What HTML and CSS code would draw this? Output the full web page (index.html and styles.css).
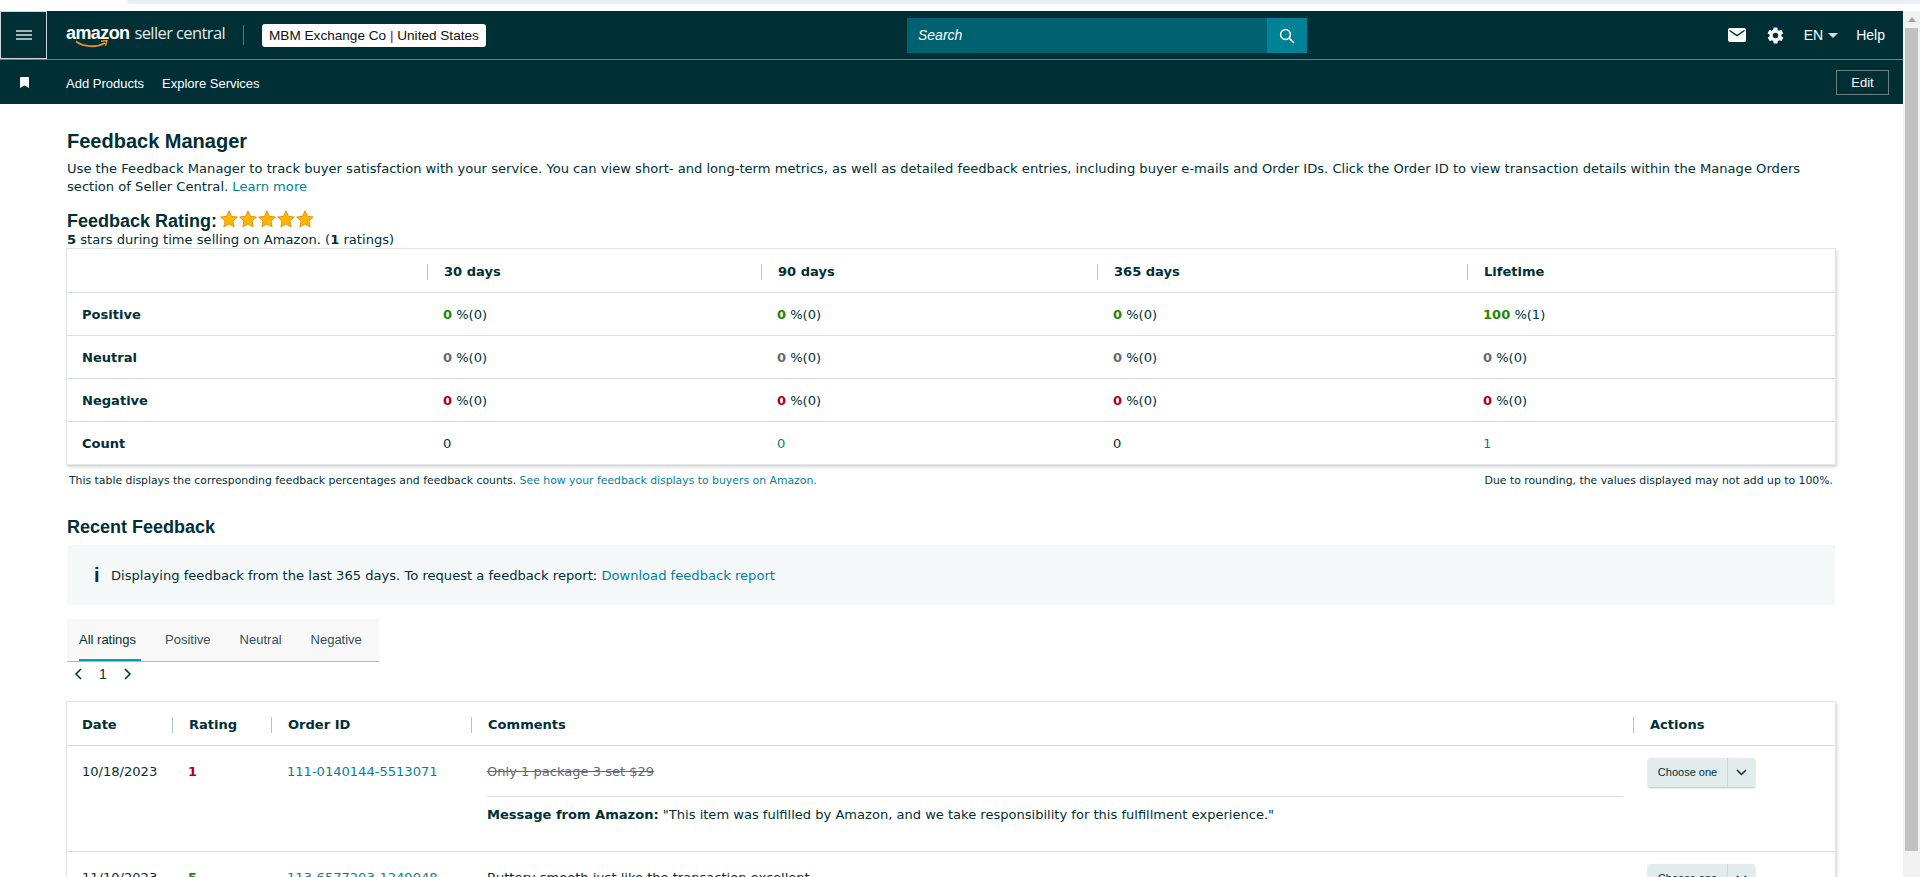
FILE: index.html
```html
<!DOCTYPE html>
<html>

<head>
    <meta charset='utf-8'>
    <title>Feedback Manager</title>
    <link rel="stylesheet" href="styles.css">
</head>

<body>
    <div class="browser-strip"><div class="browser-tab"></div></div>
    <div class="window">
        <div class="page">
            <header class="topbar">
                <div class="nav-main">
                    <div class="menu-button">
                        <svg width="16" height="10" viewBox="0 0 16 10"><path d="M0 1h16M0 5h16M0 9h16" stroke="#fff" stroke-width="1.600" opacity=".85"/></svg>
                    </div>
                    <div class="logo">
                        <span class="logo-amazon">amazon</span><span class="logo-seller">seller central</span>
                        <svg class="logo-smile" width="34" height="9" viewBox="0 0 34 9"><path d="M1 1.500C9 7 21 8 30 3" fill="none" stroke="#e8912d" stroke-width="1.800"/><path d="M26 1.200l6-.7-1.600 5.200" fill="none" stroke="#e8912d" stroke-width="1.500"/></svg>
                    </div>
                    <div class="logo-divider"></div>
                    <div class="account">MBM Exchange Co <span class="account-bar">|</span> United States</div>
                    <div class="search">
                        <div class="search-input">Search</div>
                        <div class="search-button">
                            <svg width="16" height="16" viewBox="0 0 16 16"><circle cx="6.500" cy="6.500" r="4.900" fill="none" stroke="#fff" stroke-width="1.500"/><path d="M10 10l5 5" stroke="#fff" stroke-width="1.700"/></svg>
                        </div>
                    </div>
                    <div class="nav-right">
                        <svg class="icon-mail" width="18" height="14" viewBox="0 0 18 14"><rect width="18" height="14" rx="2" fill="#fff"/><path d="M1.500 2.500L9 7.500l7.500-5" fill="none" stroke="#002f36" stroke-width="1.500"/></svg>
                        <svg class="icon-gear" width="19" height="19" viewBox="0 0 24 24"><path fill="#fff" d="M19.400 13a7.500 7.500 0 0 0 0-2l2.100-1.600a.5.5 0 0 0 .1-.7l-2-3.400a.5.5 0 0 0-.6-.2l-2.500 1a7.500 7.500 0 0 0-1.700-1l-.4-2.700a.5.5 0 0 0-.5-.4h-4a.5.5 0 0 0-.5.4l-.4 2.700a7.500 7.500 0 0 0-1.700 1l-2.500-1a.5.5 0 0 0-.6.2l-2 3.400a.5.5 0 0 0 .1.700L4.600 11a7.500 7.500 0 0 0 0 2l-2.100 1.600a.5.5 0 0 0-.1.700l2 3.400c.1.200.4.300.6.200l2.500-1c.5.400 1.100.700 1.700 1l.4 2.700c0 .2.200.4.500.4h4c.3 0 .5-.2.500-.4l.4-2.700c.6-.3 1.200-.6 1.700-1l2.500 1c.2.100.5 0 .6-.2l2-3.400a.5.5 0 0 0-.1-.7zM12 15.500a3.500 3.500 0 1 1 0-7 3.500 3.500 0 0 1 0 7z"/></svg>
                        <span class="lang">EN</span><span class="lang-caret"></span>
                        <span class="help">Help</span>
                    </div>
                </div>
                <div class="nav-sub">
                    <svg class="icon-bookmark" width="9" height="11" viewBox="0 0 9 11"><path d="M0 1a1 1 0 0 1 1-1h7a1 1 0 0 1 1 1v10L4.500 8.500 0 11z" fill="#fff"/></svg>
                    <a class="nav-link nav-link-first">Add Products</a>
                    <a class="nav-link">Explore Services</a>
                    <div class="edit-button">Edit</div>
                </div>
            </header>

            <main class="content">
                <h1 class="title">Feedback Manager</h1>
                <p class="intro">Use the Feedback Manager to track buyer satisfaction with your service. You can view short- and long-term metrics, as well as detailed feedback entries, including buyer e-mails and Order IDs. Click the Order ID to view transaction details within the Manage Orders section of Seller Central. <a class="link">Learn more</a></p>

                <div class="rating-head">
                    <h2 class="subtitle">Feedback Rating:</h2>
                    <div class="stars">
                        <svg width="95" height="18" viewBox="0 0 95 18">
                            <defs><path id="star" d="M9 .8l2.500 5.500 5.900.7-4.400 4 1.200 5.900L9 14l-5.200 2.900L5 11 .6 7l5.900-.7z" fill="#ffb400" stroke="#d98a00" stroke-width=".8"/></defs>
                            <use href="#star"/><use href="#star" x="19"/><use href="#star" x="38"/><use href="#star" x="57"/><use href="#star" x="76"/>
                        </svg>
                    </div>
                </div>
                <p class="rating-note"><b>5</b> stars during time selling on Amazon. (<b>1</b> ratings)</p>

                <table class="card-table summary">
                    <colgroup><col class="c-label"><col class="c-30"><col class="c-90"><col class="c-365"><col></colgroup>
                    <tr>
                        <th></th><th><span class="th-sep">30 days</span></th><th><span class="th-sep">90 days</span></th><th><span class="th-sep">365 days</span></th><th><span class="th-sep">Lifetime</span></th>
                    </tr>
                    <tr>
                        <td class="row-label">Positive</td>
                        <td><b class="good">0</b> %(0)</td><td><b class="good">0</b> %(0)</td><td><b class="good">0</b> %(0)</td><td><b class="good">100</b> %(1)</td>
                    </tr>
                    <tr>
                        <td class="row-label">Neutral</td>
                        <td><b class="neutral">0</b> %(0)</td><td><b class="neutral">0</b> %(0)</td><td><b class="neutral">0</b> %(0)</td><td><b class="neutral">0</b> %(0)</td>
                    </tr>
                    <tr>
                        <td class="row-label">Negative</td>
                        <td><b class="bad">0</b> %(0)</td><td><b class="bad">0</b> %(0)</td><td><b class="bad">0</b> %(0)</td><td><b class="bad">0</b> %(0)</td>
                    </tr>
                    <tr>
                        <td class="row-label">Count</td>
                        <td>0</td><td><a class="link">0</a></td><td>0</td><td><a class="link">1</a></td>
                    </tr>
                </table>
                <div class="table-note">
                    <span>This table displays the corresponding feedback percentages and feedback counts. <a class="link">See how your feedback displays to buyers on Amazon.</a></span>
                    <span>Due to rounding, the values displayed may not add up to 100%.</span>
                </div>

                <h2 class="subtitle recent">Recent Feedback</h2>
                <div class="notice">
                    <span class="notice-icon">i</span>
                    <span>Displaying feedback from the last 365 days. To request a feedback report: <a class="link">Download feedback report</a></span>
                </div>

                <div class="tabs">
                    <div class="tab tab-active">All ratings</div>
                    <div class="tab">Positive</div>
                    <div class="tab">Neutral</div>
                    <div class="tab">Negative</div>
                </div>
                <div class="pager">
                    <svg width="8" height="12" viewBox="0 0 8 12"><path d="M7 1L2 6l5 5" fill="none" stroke="#002f36" stroke-width="1.500"/></svg>
                    <span>1</span>
                    <svg width="8" height="12" viewBox="0 0 8 12"><path d="M1 1l5 5-5 5" fill="none" stroke="#002f36" stroke-width="1.500"/></svg>
                </div>

                <table class="card-table recent-table">
                    <colgroup><col class="c-date"><col class="c-rating"><col class="c-order"><col class="c-comments"><col></colgroup>
                    <tr>
                        <th class="th-first">Date</th><th><span class="th-sep">Rating</span></th><th><span class="th-sep">Order ID</span></th><th><span class="th-sep">Comments</span></th><th><span class="th-sep">Actions</span></th>
                    </tr>
                    <tr class="feedback-row">
                        <td>10/18/2023</td>
                        <td><b class="bad">1</b></td>
                        <td><a class="link">111-0140144-5513071</a></td>
                        <td>
                            <div class="struck">Only 1 package 3 set $29</div>
                            <div class="amazon-msg"><b>Message from Amazon:</b> "This item was fulfilled by Amazon, and we take responsibility for this fulfillment experience."</div>
                        </td>
                        <td class="action-cell">
                            <div class="split-button"><span class="split-label">Choose one</span><span class="split-arrow"><svg width="11" height="7" viewBox="0 0 11 7"><path d="M1 1l4.500 4.500L10 1" fill="none" stroke="#002f36" stroke-width="1.500"/></svg></span></div>
                        </td>
                    </tr>
                    <tr class="feedback-row">
                        <td>11/10/2023</td>
                        <td><b class="good">5</b></td>
                        <td><a class="link">113-6577203-1249048</a></td>
                        <td>Buttery smooth just like the transaction excellent</td>
                        <td class="action-cell">
                            <div class="split-button"><span class="split-label">Choose one</span><span class="split-arrow"><svg width="11" height="7" viewBox="0 0 11 7"><path d="M1 1l4.500 4.500L10 1" fill="none" stroke="#002f36" stroke-width="1.500"/></svg></span></div>
                        </td>
                    </tr>
                </table>
            </main>
        </div>

        <div class="scrollbar">
            <div class="scroll-up"></div>
            <div class="scroll-thumb"></div>
        </div>
    </div>
</body>

</html>
```

FILE: styles.css
```css
html, body {
    height: 100%;
    margin: 0;
    overflow: hidden;
    background: #fff;
}
body {
    font-family: "DejaVu Sans", sans-serif;
    font-size: 13.1px;
    color: #002f36;
    display: flex;
    flex-direction: column;
}
a {
    text-decoration: none;
}
.browser-strip {
    height: 11px;
    flex: none;
    background: #fff;
}
.browser-tab {
    height: 4px;
    margin-left: 127px;
    background: #eceef7;
    border-bottom-left-radius: 8px;
}
.window {
    flex: 1;
    display: flex;
    min-height: 0;
}
.page {
    flex: 1;
    min-width: 0;
    overflow: hidden;
}

/* top navigation */
.topbar {
    background: #002f36;
    color: #fff;
    font-family: "Liberation Sans", sans-serif;
}
.nav-main {
    height: 48px;
    display: flex;
    align-items: center;
    border-bottom: 1px solid #677f83;
    position: relative;
}
.menu-button {
    width: 47px;
    height: 48px;
    box-sizing: border-box;
    border: 1px solid #cfd6d7;
    display: flex;
    align-items: center;
    justify-content: center;
}
.logo {
    margin-left: 19px;
    position: relative;
    white-space: nowrap;
    font-family: "Open Sans", sans-serif;
    display: flex;
    align-items: baseline;
    margin-top: -6px;
}
.logo-amazon {
    font-family: "Liberation Sans", sans-serif;
    font-size: 18px;
    font-weight: bold;
    letter-spacing: -0.6px;
    margin-right: 5px;
}
.logo-seller {
    font-size: 16.5px;
    letter-spacing: -0.6px;
    color: #e4e9e9;
}
.logo-smile {
    position: absolute;
    left: 9px;
    top: 19px;
}
.logo-divider {
    width: 1px;
    height: 20px;
    background: #5b7377;
    margin-left: 18px;
}
.account {
    margin-left: 18px;
    background: #fff;
    color: #111;
    border-radius: 3px;
    height: 23px;
    line-height: 23px;
    padding: 0 7px;
    font-size: 13.6px;
    white-space: nowrap;
}
.account-bar {
    color: #800080;
}
.search {
    position: absolute;
    left: 907px;
    top: 7px;
    width: 400px;
    height: 35px;
    display: flex;
}
.search-input {
    flex: 1;
    background: #006270;
    font-style: italic;
    font-size: 14px;
    line-height: 35px;
    padding-left: 11px;
}
.search-button {
    width: 40px;
    background: #008296;
    display: flex;
    align-items: center;
    justify-content: center;
}
.nav-right {
    margin-left: auto;
    display: flex;
    align-items: center;
    font-size: 14px;
    padding-right: 18px;
}
.icon-gear {
    margin-left: 20px;
}
.lang {
    margin-left: 19px;
}
.lang-caret {
    border-left: 5px solid transparent;
    border-right: 5px solid transparent;
    border-top: 5px solid #d5dbdb;
    margin-left: 5px;
}
.help {
    margin-left: 18px;
}
.nav-sub {
    height: 44px;
    display: flex;
    align-items: center;
    font-size: 13px;
}
.icon-bookmark {
    margin-left: 20px;
}
.nav-link {
    color: #fff;
    margin-left: 18px;
    padding-top: 3px;
}
.nav-link-first {
    margin-left: 37px;
}
.edit-button {
    margin-left: auto;
    margin-right: 14px;
    width: 51px;
    height: 23px;
    line-height: 23px;
    text-align: center;
    border: 1px solid #6c8084;
}

/* page content */
.content {
    padding: 25px 68px 0 67px;
}
.title {
    font-family: "Liberation Sans", sans-serif;
    font-size: 20px;
    line-height: 24px;
    margin: 0;
}
.intro {
    margin: 7px 0 0;
    line-height: 18px;
}
.link {
    color: #008296;
}
.rating-head {
    display: flex;
    align-items: center;
    margin-top: 13px;
    height: 24px;
}
.subtitle {
    font-family: "Liberation Sans", sans-serif;
    font-size: 18px;
    line-height: 24px;
    margin: 0;
}
.stars {
    margin-left: 3px;
    margin-top: -4px;
    height: 18px;
}
.rating-note {
    margin: -1px 0 0;
    line-height: 15px;
    height: 17px;
}
.card-table {
    width: 100%;
    border-collapse: collapse;
    table-layout: fixed;
    background: #fff;
    box-shadow: 0 0 0 1px #e3e6e6, 1px 2px 3px 1px rgba(0, 0, 0, .18);
}
.card-table th, .card-table td {
    height: 43px;
    box-sizing: border-box;
    padding: 0;
    text-align: left;
    border-top: 1px solid #d9dddd;
    font-size: 13.05px;
}
.card-table tr:first-child th {
    border-top: 0;
    font-weight: bold;
    padding-top: 4px;
}
.recent-table tr:first-child th {
    padding-top: 3px;
}
.th-sep {
    display: block;
    line-height: 16px;
    border-left: 1px solid #b9c2c3;
    padding-left: 16px;
}
.c-label { width: 360px; }
.c-30 { width: 334px; }
.c-90 { width: 336px; }
.c-365 { width: 370px; }
.summary td {
    padding-top: 2px;
}
.summary td:not(.row-label) {
    padding-left: 16px;
}
.row-label {
    font-weight: bold;
    padding-left: 15px !important;
}
.good { color: #1e8900; }
.neutral { color: #6c6c6c; }
.bad { color: #b0001e; }
.table-note {
    display: flex;
    justify-content: space-between;
    font-size: 10.85px;
    line-height: 14px;
    margin-top: 10px;
    padding: 0 2px;
}
.recent {
    margin-top: 27px;
}
.notice {
    margin-top: 6px;
    height: 60px;
    background: #f5f8f8;
    display: flex;
    align-items: center;
    padding-left: 27px;
}
.notice-icon {
    font-family: "Liberation Sans", sans-serif;
    font-weight: bold;
    font-size: 20px;
    width: 17px;
}
.tabs {
    margin-top: 14px;
    width: 312px;
    height: 43px;
    box-sizing: border-box;
    background: #f8f8f8;
    border-bottom: 1px solid #b5b5b5;
    display: flex;
    padding-left: 12px;
    font-family: "Liberation Sans", sans-serif;
    font-size: 13px;
    color: #33525a;
    white-space: nowrap;
}
.tab {
    margin-right: 24px;
    padding-right: 5px;
    line-height: 42px;
}
.tab-active {
    color: #002f36;
    height: 42px;
    box-sizing: border-box;
    border-bottom: 2px solid #00a1b2;
}
.pager {
    height: 23px;
    display: flex;
    align-items: center;
    gap: 17px;
    padding-left: 7px;
    font-family: "Liberation Sans", sans-serif;
    font-size: 14px;
}
.recent-table {
    margin-top: 17px;
}
.c-date { width: 105px; }
.c-rating { width: 99px; }
.c-order { width: 200px; }
.c-comments { width: 1162px; }
.recent-table .th-first {
    padding-left: 15px;
}
.feedback-row td {
    vertical-align: top;
    padding: 18px 0 0 16px;
    height: 106px;
    line-height: 15px;
}
.feedback-row td:first-child {
    padding-left: 15px;
}
.struck {
    color: #667;
    text-decoration: line-through;
    height: 32px;
}
.amazon-msg {
    border-top: 1px solid #d9dddd;
    margin-right: 10px;
    padding-top: 10px;
    white-space: nowrap;
}
.feedback-row .action-cell {
    padding: 12px 0 0 15px;
}
.split-button {
    display: inline-flex;
    height: 29px;
    background: #e3ecec;
    border-radius: 2px;
    box-shadow: 0 1px 2px rgba(0, 0, 0, .25);
    font-family: "Liberation Sans", sans-serif;
    font-size: 11px;
    line-height: 28px;
}
.split-label {
    width: 79px;
    text-align: center;
    border-right: 1px solid #cfd8d8;
}
.split-arrow {
    width: 27px;
    display: flex;
    align-items: center;
    justify-content: center;
}

/* fake browser scrollbar */
.scrollbar {
    width: 17px;
    flex: none;
    background: #f1f1f1;
    position: relative;
}
.scroll-up {
    width: 0;
    margin: 6px auto 0;
    border-left: 4px solid transparent;
    border-right: 4px solid transparent;
    border-bottom: 5px solid #a3a3a3;
}
.scroll-thumb {
    margin: 6px 2px 0;
    height: 823px;
    background: #c1c1c1;
}
```
